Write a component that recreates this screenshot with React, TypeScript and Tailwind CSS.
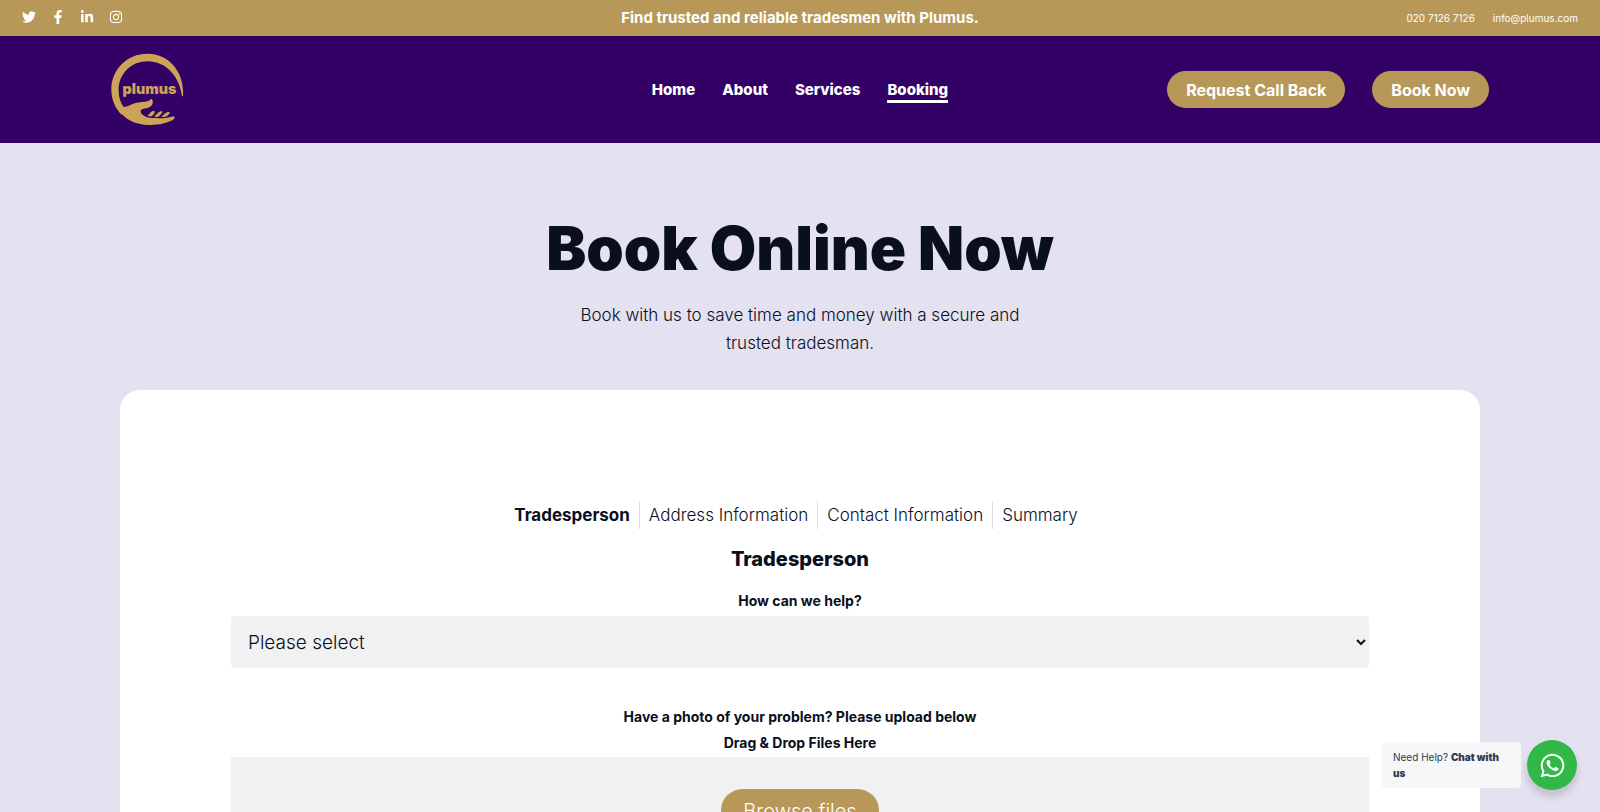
import { FaFacebookF, FaInstagram, FaLinkedinIn, FaTwitter, FaWhatsapp } from 'react-icons/fa';

const socials = [
  { name: 'Twitter', icon: FaTwitter },
  { name: 'Facebook', icon: FaFacebookF },
  { name: 'LinkedIn', icon: FaLinkedinIn },
  { name: 'Instagram', icon: FaInstagram },
];

const links = ['Home', 'About', 'Services', 'Booking'];

const steps = ['Tradesperson', 'Address Information', 'Contact Information', 'Summary'];

const Logo = () => (
  <svg viewBox="62 40 220 220" className="size-[73px]" fill="#cda35a" role="img" aria-label="plumus">
    {/* ring that thins out to the right */}
    <path d="M279 170 C284 98 238 42 172 42 C110 42 63 90 63 150 C63 180 74 206 94 226 L100 203 C90 190 85 172 85 150 C86 101 124 65 172 65 C228 65 268 110 276 170 Z" />
    {/* open hand */}
    <path d="M88 194 C96 204 104 204 114 200 C126 194 140 189 156 188 C168 187 178 186 182 179 C186 178 189 184 188 190 C186 201 174 207 160 208 C151 209 149 217 155 224 C163 234 178 237 195 236 C214 237 232 236 248 231 C254 230 256 236 251 240 C230 253 204 258 176 257 C136 256 104 240 86 214 Z" />
    <path d="M172 229 C178 224 182 216 188 215 C192 214 196 216 194 219 C190 226 187 230 182 231 Z" />
    <path d="M192 232 C199 225 204 217 210 216 C215 215 219 217 216 220 C211 227 207 231 202 233 Z" />
    <path d="M213 233 C220 227 227 219 233 218 C238 217 241 219 238 222 C233 229 229 231 223 233 Z" />
    <text x="97" y="165" fontSize="43" fontWeight="900" fontFamily="Inter, sans-serif">plumus</text>
  </svg>
);

const App = () => {
  return (
    <div className="min-h-screen bg-[#e4e1f0] font-[Inter,sans-serif] text-[#0a0f1e]">
      <div className="grid h-9 grid-cols-[1fr_auto_1fr] items-center bg-[#b89859] px-[22px] text-white">
        <div className="flex items-center gap-[15px] pb-[2px]">
          {socials.map(({ name, icon: Icon }) => (
            <a key={name} href="#" aria-label={name}>
              <Icon className="size-[14px]" />
            </a>
          ))}
        </div>
        <p className="text-[15px] leading-5 font-bold">Find trusted and reliable tradesmen with Plumus.</p>
        <div className="flex justify-end gap-[18px] text-[10px]">
          <a href="tel:02071267126">020 7126 7126</a>
          <a href="mailto:info@plumus.com">info@plumus.com</a>
        </div>
      </div>

      <header className="grid h-[107px] grid-cols-[1fr_auto_1fr] items-center bg-[#330066] px-[111px] text-white">
        <a href="#">
          <Logo />
        </a>
        <nav className="flex gap-[27px] text-[15px] font-extrabold">
          {links.map((link) => (
            <a
              key={link}
              href="#"
              className={link === 'Booking' ? 'border-y-[3px] border-t-transparent border-b-white leading-5' : 'border-y-[3px] border-transparent leading-5'}
            >
              {link}
            </a>
          ))}
        </nav>
        <div className="flex justify-end gap-[27px] text-[16px] font-bold">
          <button className="h-[37px] rounded-full bg-[#b89859] px-[19px]">Request Call Back</button>
          <button className="h-[37px] rounded-full bg-[#b89859] px-[19px]">Book Now</button>
        </div>
      </header>

      <main className="pt-[67px] text-center">
        <h1 className="text-[60px] leading-[76px] font-black">Book Online Now</h1>
        <p className="mx-auto mt-[15px] max-w-[480px] text-[17px] leading-7 font-light">
          Book with us to save time and money with a secure and trusted tradesman.
        </p>

        <form className="mx-auto mt-[33px] w-[85%] rounded-t-[20px] bg-white px-[111px] pt-[111px] pb-20">
          <ol className="flex justify-center pr-2 text-[17px] leading-7 font-light">
            {steps.map((step, index) => (
              <li
                key={step}
                className={index === 0 ? 'px-[9px] font-bold' : 'border-l border-[#dcd8ec] px-[9px]'}
              >
                {step}
              </li>
            ))}
          </ol>
          <h2 className="mt-4 text-[20px] leading-7 font-extrabold">Tradesperson</h2>
          <label htmlFor="help" className="mt-[15px] block text-[14px] leading-[26px] font-bold">How can we help?</label>
          <select id="help" className="mt-[2px] block h-[52px] w-full rounded bg-[#f1f1f1] px-[13px] text-[19px] font-light">
            <option>Please select</option>
          </select>

          <p className="mt-9 text-[14px] leading-[26px] font-bold">Have a photo of your problem? Please upload below</p>
          <p className="text-[14px] leading-[26px] font-bold">Drag &amp; Drop Files Here</p>
          <div className="mt-[1px] bg-[#f1f1f1] py-8">
            <button type="button" className="h-[43px] rounded-full bg-[#b89859] px-[22px] text-[20px] font-light text-white">
              Browse files
            </button>
          </div>
        </form>
      </main>

      <a href="#" className="fixed right-[23px] bottom-[22px] flex items-center gap-[6px]">
        <span className="w-[139px] rounded bg-[#f5f7f9] px-[11px] py-[7px] text-[10px] leading-4 text-[#333a4d]">
          Need Help? <strong className="font-black">Chat with <br />us</strong>
        </span>
        <span className="flex size-[50px] items-center justify-center rounded-full bg-[#32b847] text-white shadow-[0_6px_6px_1px_#c6c4d3]">
          <FaWhatsapp className="size-[27px]" />
        </span>
      </a>
    </div>
  );
};

export default App;
